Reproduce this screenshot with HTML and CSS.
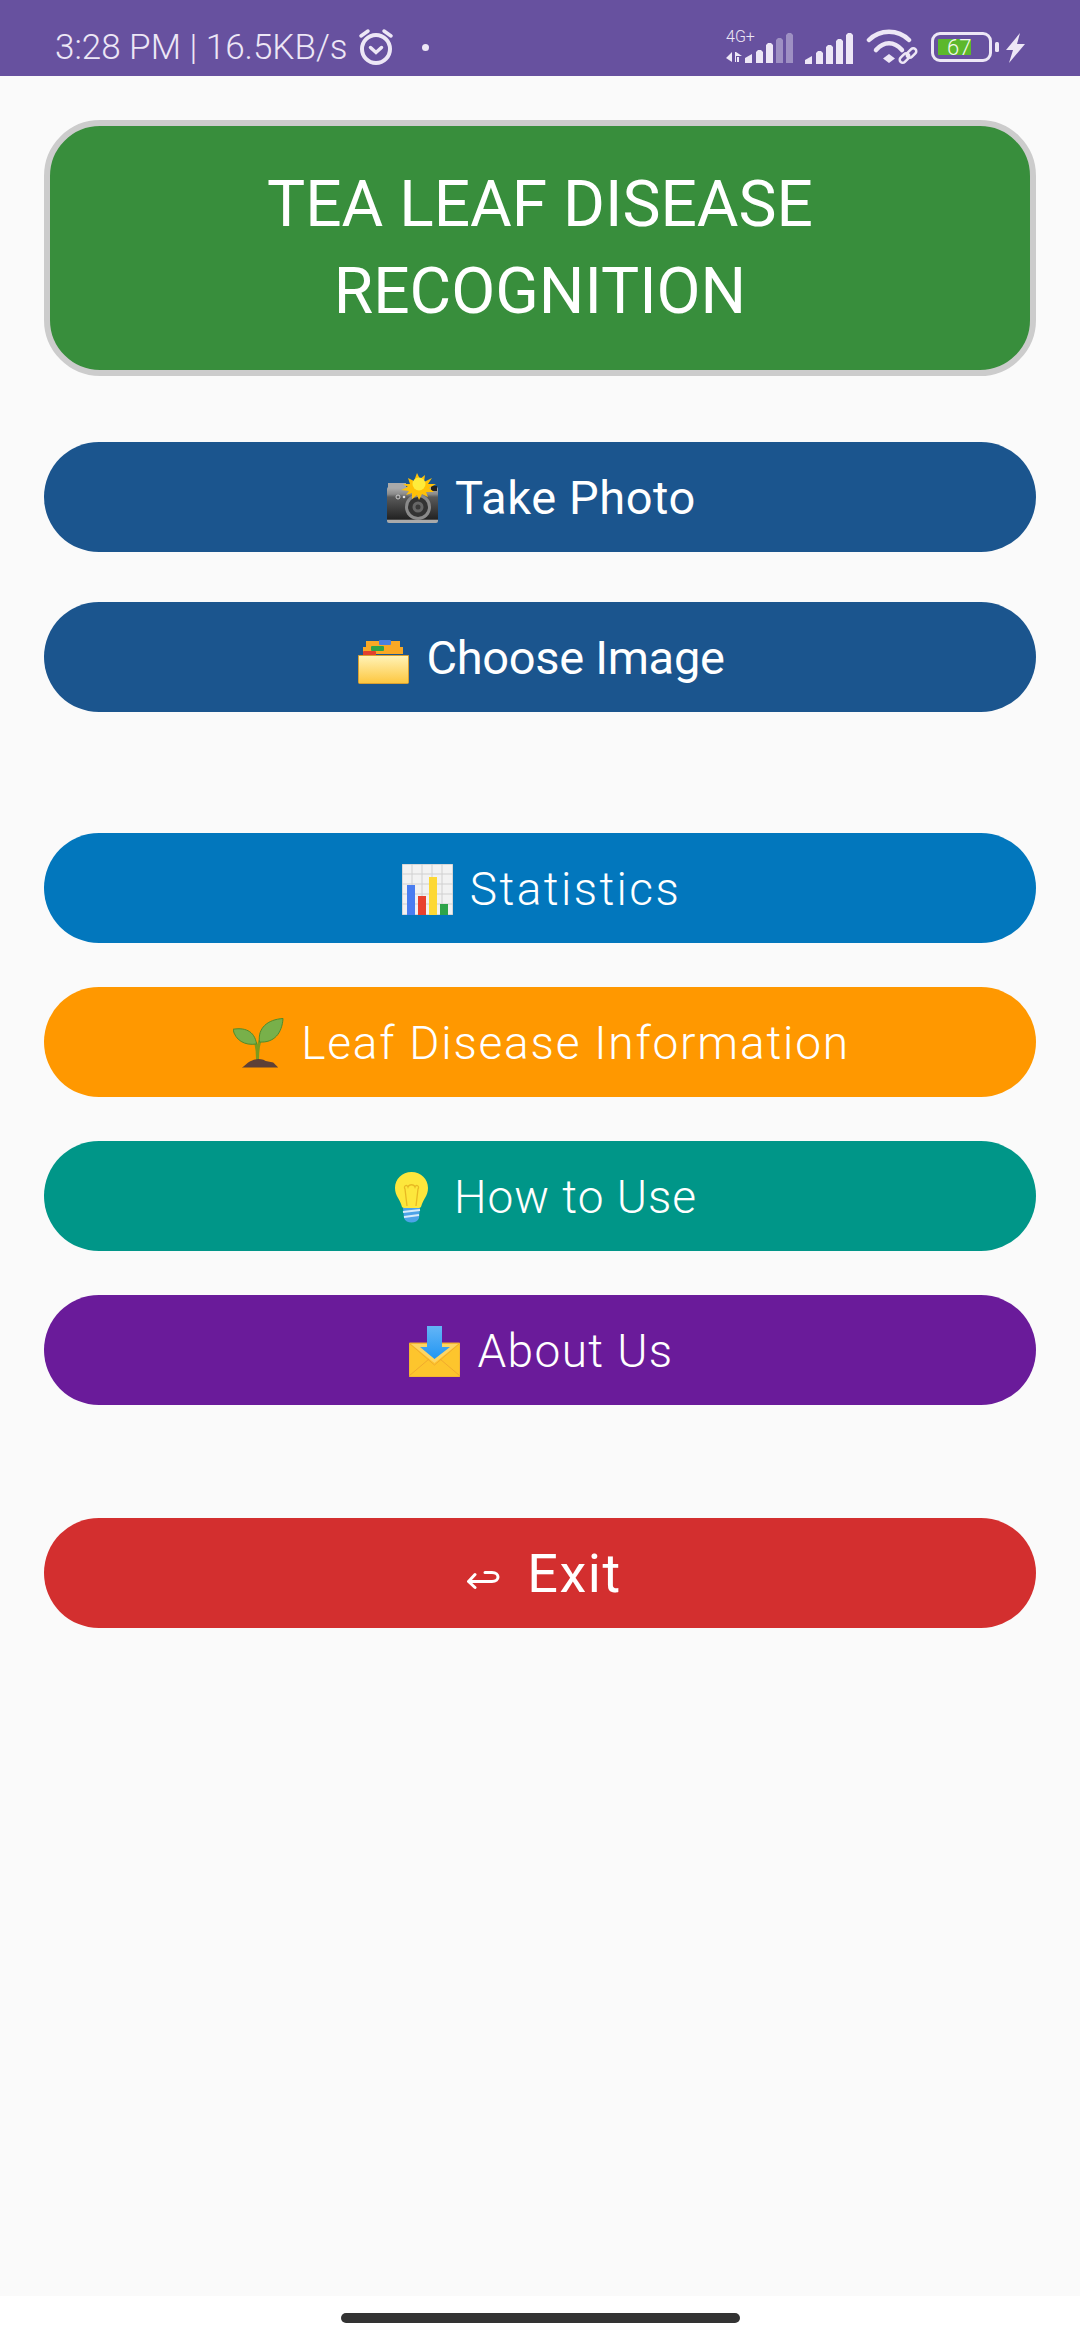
FILE: index.html
```html
<!DOCTYPE html>
<html lang="en">
<head>
<meta charset="utf-8">
<title>Tea Leaf Disease Recognition</title>
<link rel="stylesheet" href="styles.css">
</head>
<body>
<div class="status">
  <span class="clock">3:28 PM | 16.5KB/s</span>
  <svg class="alarm" width="36" height="38" viewBox="0 0 36 38"><g fill="none" stroke="#ede7f6" stroke-linecap="round"><circle cx="18" cy="21" r="14" stroke-width="4"/><path d="M3 8l7-5M33 8l-7-5" stroke-width="3.5"/><path d="M12.500 19.500l5.500 5 5.500-5" stroke-width="3.500"/></g></svg>
  <span class="dot"></span>
  <span class="spacer"></span>
  <svg class="sig1" width="68" height="36" viewBox="0 0 68 36"><text x="0" y="13" class="g4">4G+</text><g fill="#ede7f6"><path d="M6 23v10l-6-4zM9 23h1v10H9zM10 23l6 4h-6zM11 28h2v5h-2z"/><path d="M19 29l7-4v9h-7zM30 23l2-2h3l2 2v11h-7zM40 16l2-2h3l2 2v18h-7z"/></g><g fill="#ede7f6" opacity=".42"><path d="M50 11l2-2h3l2 2v23h-7zM60 6l2-2h3l2 2v28h-7z"/></g></svg>
  <svg class="sig2" width="48" height="32" viewBox="0 0 48 32"><path fill="#ede7f6" d="M0 28l7-4v8h-7zM11 21l2-2h3l2 2v11h-7zM21 15l2-2h3l2 2v17h-7zM31 9l2-2h3l2 2v23h-7zM41 3l2-2h3l2 2v29h-7z"/></svg>
  <svg class="wifi" width="52" height="36" viewBox="0 0 52 36"><g fill="none" stroke="#ede7f6" stroke-linecap="round" stroke-width="4.500"><path d="M3 11C14 0 32 0 43 11"/><path d="M10 21C18 12 28 12 36 21"/></g><path fill="#ede7f6" d="M23 25l6 4.500-6 4.500-6-4.500z"/><g fill="none" stroke="#ede7f6" stroke-width="2.500"><rect x="33" y="26" width="11" height="6" rx="3" transform="rotate(-45 38.500 29)"/><rect x="40" y="21" width="11" height="6" rx="3" transform="rotate(-45 45.500 24)"/></g></svg>
  <svg class="batt" width="68" height="30" viewBox="0 0 68 30"><rect x="1.500" y="1.500" width="58" height="27" rx="7.500" fill="none" stroke="#ede7f6" stroke-width="3"/><rect x="7" y="7" width="33" height="16" fill="#5cb82b"/><rect x="64" y="10" width="4" height="10" rx="1.500" fill="#ede7f6"/><text x="16" y="23" class="pct">67</text></svg>
  <svg class="bolt" width="20" height="30" viewBox="0 0 20 30"><path fill="#ede7f6" d="M14 0L0 17h7L3 30l16-19h-8z"/></svg>
</div>

<main class="screen">
  <h1 class="title">TEA LEAF DISEASE<br>RECOGNITION</h1>

  <div class="btn btn-blue first">
    <svg class="emoji" viewBox="0 0 51 51"><defs><linearGradient id="cam" x1="0" y1="0" x2="0" y2="1"><stop offset="0" stop-color="#b0b0b0"/><stop offset=".2" stop-color="#8a8a8a"/><stop offset=".28" stop-color="#5a5a5a"/><stop offset=".9" stop-color="#222"/><stop offset=".91" stop-color="#aaa"/></linearGradient></defs><rect x="0" y="14" width="51" height="36" rx="2" fill="url(#cam)"/><rect x="1" y="10" width="18" height="5" fill="#aaa"/><circle cx="31" cy="34" r="13" fill="#8a8a8a"/><circle cx="31" cy="34" r="10" fill="#333"/><circle cx="31" cy="34" r="5.500" fill="#666"/><circle cx="31" cy="34" r="2.500" fill="#3a3a3a"/><circle cx="11" cy="24" r="2" fill="none" stroke="#ccc"/><circle cx="17" cy="24" r="1.300" fill="#ddd"/><rect x="44" y="13" width="6" height="5" fill="#222"/><path fill="#ffc107" d="M30 0l3 6 5-4-1 7 8-4-4 6 8 0-7 4 5 4-8 0 2 5-6-3-3 6-2-5-5 4 0-6-6 2 3-4-8-1 7-3-5-3 7 0-2-6 6 3z"/><circle cx="32" cy="11" r="6.500" fill="#ffeb3b"/></svg>
    <span class="label l-take">Take Photo</span>
  </div>

  <div class="btn btn-blue second">
    <svg class="emoji folder" viewBox="0 0 51 44"><defs><linearGradient id="fold" x1="0" y1="0" x2="0" y2="1"><stop offset="0" stop-color="#fff3b8"/><stop offset="1" stop-color="#fdc73f"/></linearGradient></defs><path fill="#f9a825" d="M8 1h34v6h3v7H5V7h3z"/><rect x="21" y="0" width="12" height="5" rx="1" fill="#4a7fe0"/><rect x="13" y="6" width="13" height="5" rx="1" fill="#2ea44a"/><rect x="5" y="11" width="13" height="5" rx="1" fill="#e2402e"/><path fill="url(#fold)" stroke="#d9a032" d="M.5 15.500h50v27a1 1 0 0 1-1 1h-48a1 1 0 0 1-1-1z"/></svg>
    <span class="label l-choose">Choose Image</span>
  </div>

  <div class="btn btn-sky third thin">
    <svg class="emoji" viewBox="0 0 51 51"><rect width="51" height="51" fill="#f2f2f2" stroke="#bdbdbd"/><path stroke="#d0d0d0" fill="none" d="M0 10h51M0 20h51M0 30h51M0 40h51M10 0v51M20 0v51M30 0v51M40 0v51"/><rect x="5" y="21" width="8" height="30" fill="#4a7df0"/><rect x="16" y="32" width="8" height="19" fill="#e8412e"/><rect x="27" y="13" width="8" height="38" fill="#fdd835"/><rect x="38" y="40" width="8" height="11" fill="#2ea44a"/></svg>
    <span class="label l-stats">Statistics</span>
  </div>

  <div class="btn btn-orange next thin">
    <svg class="emoji" viewBox="0 0 52 51"><path fill="none" stroke="#7c9a1e" stroke-width="3" d="M25 42c0-9-1-14-2-18M25 42c0-11 1-17 4-23"/><path fill="#78b04a" stroke="#4f8a2c" d="M51 0C50 15 42 25 27 24 25 10 35 1 51 0z"/><path fill="#78b04a" stroke="#4f8a2c" d="M0 11c11-2 22 1 24 15C12 28 2 22 0 11z"/><path fill="#5d4037" d="M9 50c4-2 6-6 10-7 4-2 8-2 12-1 3 2 7 2 10 3 2 2 3 3 5 5z"/></svg>
    <span class="label l-leaf">Leaf Disease Information</span>
  </div>

  <div class="btn btn-teal next thin">
    <svg class="emoji" viewBox="-9 0 51 51"><path fill="#fde73c" d="M16.500 0C7 0 0 7 0 16c0 8 5 11 7 19 1 2 18 2 19 0 2-8 7-11 7-19C33 7 26 0 16.500 0z"/><path fill="none" stroke="#e8b923" stroke-width="1.300" d="M12 34L10 17c-2-3 2-5 3-2 1-3 6-3 7 0 1-3 5-1 3 2l-2 17"/><path fill="#4ca3e8" d="M8 36h17l-1 10c-2 6-13 6-15 0z"/><path stroke="#d6ecfa" stroke-width="2" d="M8 40l17-2M9 45l15-2"/></svg>
    <span class="label">How to Use</span>
  </div>

  <div class="btn btn-purple next thin">
    <svg class="emoji" viewBox="0 0 51 51"><defs><linearGradient id="arr" x1="0" y1="0" x2="0" y2="1"><stop offset="0" stop-color="#64b5f6"/><stop offset="1" stop-color="#2196f3"/></linearGradient></defs><rect y="17" width="51" height="34" rx="1" fill="#fdc52d" stroke="#eba73a"/><path fill="none" stroke="#f0aa2e" d="M0 50l20-17M51 50L31 33M0 17l25.500 22L51 17"/><path fill="#fee08a" d="M2 18h47L25.500 37z" opacity=".6"/><path fill="url(#arr)" d="M18 0h15v21h8L25.500 33 11 21h7z"/></svg>
    <span class="label l-about">About Us</span>
  </div>

  <div class="btn btn-red exit">
    <svg class="arrow" width="33" height="19" viewBox="0 0 33 19"><path fill="none" stroke="#fff" stroke-width="3" stroke-linecap="round" stroke-linejoin="round" d="M8 3.500L1.500 10.500L8 16.500M2 10.500H25c8 0 8-9 0-9H18"/></svg>
    <span class="label l-exit">Exit</span>
  </div>
</main>

<div class="navbar"><span class="pill"></span></div>
</body>
</html>
```
FILE: styles.css
```css
* { box-sizing: border-box; }
html, body { margin: 0; padding: 0; }
body {
  width: 1080px;
  height: 2340px;
  display: flex;
  flex-direction: column;
  background: #fff;
  font-family: Roboto, "Noto Sans", sans-serif;
  overflow: hidden;
}
.status {
  height: 76px;
  flex: none;
  background: #67519f;
  display: flex;
  align-items: flex-start;
  padding: 0 54px 0 55px;
  color: #ede7f6;
}
.clock { font-size: 35px; line-height: 46px; margin-top: 25px; font-weight: 300; white-space: nowrap; }
.alarm { margin: 28px 0 0 10px; }
.dot { width: 7px; height: 7px; border-radius: 50%; background: #ede7f6; margin: 44px 0 0 28px; }
.spacer { flex: 1; }
.sig1 { margin-top: 29px; overflow: visible; }
.sig2 { margin: 32px 0 0 11px; }
.wifi { margin: 29px 0 0 13px; }
.batt { margin: 32px 0 0 13px; }
.bolt { margin: 33px 0 0 7px; }
.g4 { font-family: Roboto, sans-serif; font-size: 16px; fill: #ede7f6; font-weight: 300; }
.pct { font-family: Roboto, sans-serif; font-size: 22px; fill: #f4f8ee; font-weight: 300; }

.screen {
  flex: 1;
  background: #fafafa;
  padding: 44px 44px 0;
  display: flex;
  flex-direction: column;
}
.title {
  margin: 0;
  height: 256px;
  background: #388e3c;
  border: 6px solid #cccccc;
  border-radius: 56px;
  color: #fff;
  font-size: 64px;
  font-weight: 450;
  line-height: 87px;
  text-align: center;
  display: flex;
  align-items: center;
  justify-content: center;
}
.btn {
  height: 110px;
  flex: none;
  border-radius: 55px;
  display: flex;
  align-items: center;
  justify-content: center;
  gap: 17px;
  padding-left: 3px;
  color: #fff;
  font-size: 47px;
  font-weight: 450;
}
.thin { font-size: 46px; font-weight: 350; letter-spacing: 1px; }
.label { line-height: 60px; padding-top: 2px; white-space: nowrap; }
.l-take { letter-spacing: .6px; }
.l-choose { letter-spacing: -.3px; }
.l-stats { letter-spacing: 2.4px; }
.l-leaf { letter-spacing: 1.8px; }
.l-about { letter-spacing: 1.4px; }
.emoji { width: 51px; height: 51px; flex: none; margin-top: 3px; }
.folder { height: 44px; margin-top: 10px; }
.first { margin-top: 66px; }
.second { margin-top: 50px; }
.third { margin-top: 121px; }
.next { margin-top: 44px; }
.exit { margin-top: 113px; font-size: 54px; gap: 27px; padding-left: 9px; }
.arrow { margin-top: 14px; }
.l-exit { letter-spacing: 1.500px; }
.btn-blue { background: #1b558e; }
.btn-sky { background: #0277bd; }
.btn-orange { background: #ff9800; }
.btn-teal { background: #009688; }
.btn-purple { background: #6a1b9a; }
.btn-red { background: #d32f2f; }
.navbar {
  height: 44px;
  flex: none;
  background: #fff;
  display: flex;
  justify-content: center;
  padding-top: 17px;
}
.pill { width: 399px; height: 10px; border-radius: 5px; background: #333; }
```
